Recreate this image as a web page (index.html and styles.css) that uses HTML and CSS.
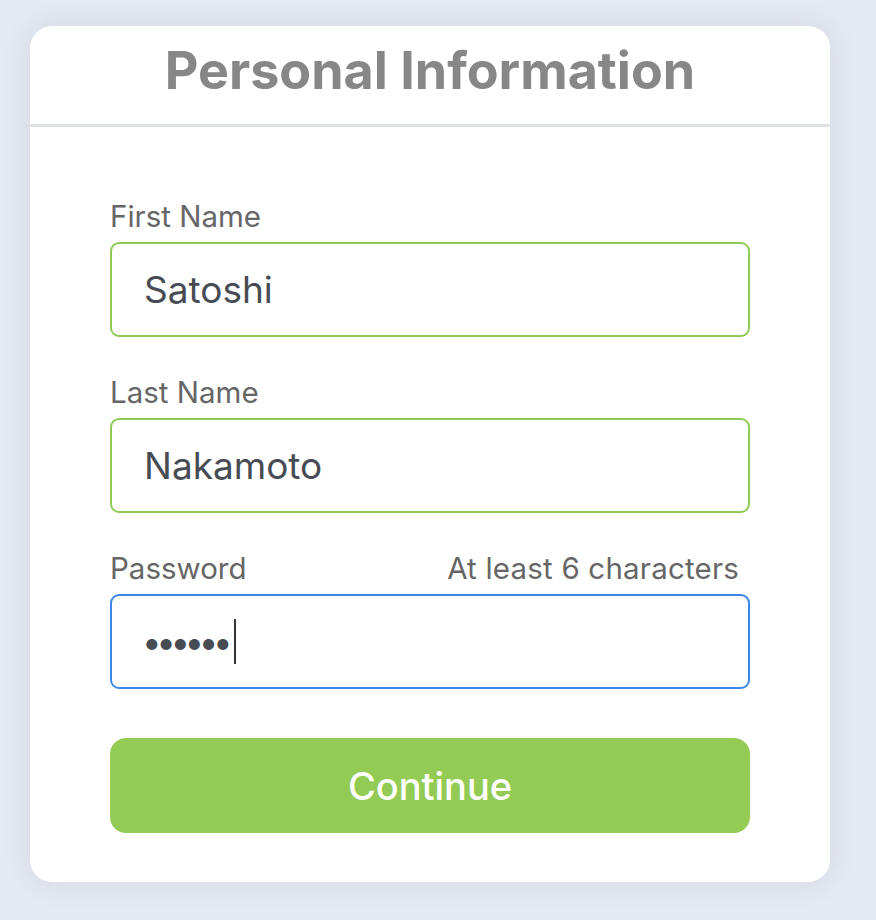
FILE: index.html
```html
<!DOCTYPE html>
<html lang="en">
<head>
<meta charset="utf-8">
<title>Personal Information</title>
<link rel="stylesheet" href="styles.css">
</head>
<body>
<main class="card">
  <header class="card-header">
    <h1 class="title">Personal Information</h1>
  </header>
  <form class="form">
    <div class="field">
      <div class="label-row"><label class="label">First Name</label></div>
      <div class="input input-valid">Satoshi</div>
    </div>
    <div class="field">
      <div class="label-row"><label class="label">Last Name</label></div>
      <div class="input input-valid">Nakamoto</div>
    </div>
    <div class="field">
      <div class="label-row"><label class="label">Password</label><span class="hint">At least 6 characters</span></div>
      <div class="input input-focus"><span class="dots">••••••</span><span class="caret"></span></div>
    </div>
    <button type="button" class="btn">Continue</button>
  </form>
</main>
</body>
</html>
```
FILE: styles.css
```css
* { box-sizing: border-box; }
html, body { margin: 0; padding: 0; }
body {
  background: #e5e9f1;
  font-family: "Inter", "Noto Sans", sans-serif;
  width: 876px;
  height: 920px;
  overflow: hidden;
  padding: 26px 0 0 30px;
}
.card {
  width: 800px;
  height: 856px;
  background: #fff;
  border-radius: 22px;
  box-shadow: 0 0 30px rgba(60, 70, 80, 0.10);
  overflow: hidden;
}
.card-header {
  height: 101px;
  border-bottom: 3px solid #dfe3e9;
  display: flex;
  justify-content: center;
  align-items: center;
}
.title {
  margin: 0;
  font-size: 52px;
  font-weight: 700;
  color: #878787;
  line-height: 1;
  padding-bottom: 8px;
}
.form {
  padding: 70px 80px 0;
  display: flex;
  flex-direction: column;
}
.field { margin-bottom: 36px; }
.field:last-of-type { margin-bottom: 49px; }
.label-row {
  display: flex;
  justify-content: space-between;
  align-items: baseline;
  height: 36px;
  margin-bottom: 9px;
}
.label, .hint {
  font-size: 29.5px;
  color: #666;
  line-height: 38px;
}
.hint { padding-right: 11px; letter-spacing: 0.2px; }
.input {
  height: 95px;
  border: 2px solid #8fcb55;
  border-radius: 9px;
  padding: 0 32px;
  display: flex;
  align-items: center;
  font-size: 37px;
  color: #474c54;
}
.input-focus { border-color: #3d87e6; }
.dots {
  font-size: 35px;
  letter-spacing: -5.5px;
  color: #474c54;
  margin-left: -2px;
}
.caret {
  width: 2px;
  height: 45px;
  background: #333;
  margin-left: 7px;
}
.btn {
  height: 95px;
  border: 0;
  border-radius: 16px;
  background: #93cb55;
  color: #fff;
  font-family: inherit;
  font-size: 38px;
  font-weight: 500;
  padding: 0;
}
```
